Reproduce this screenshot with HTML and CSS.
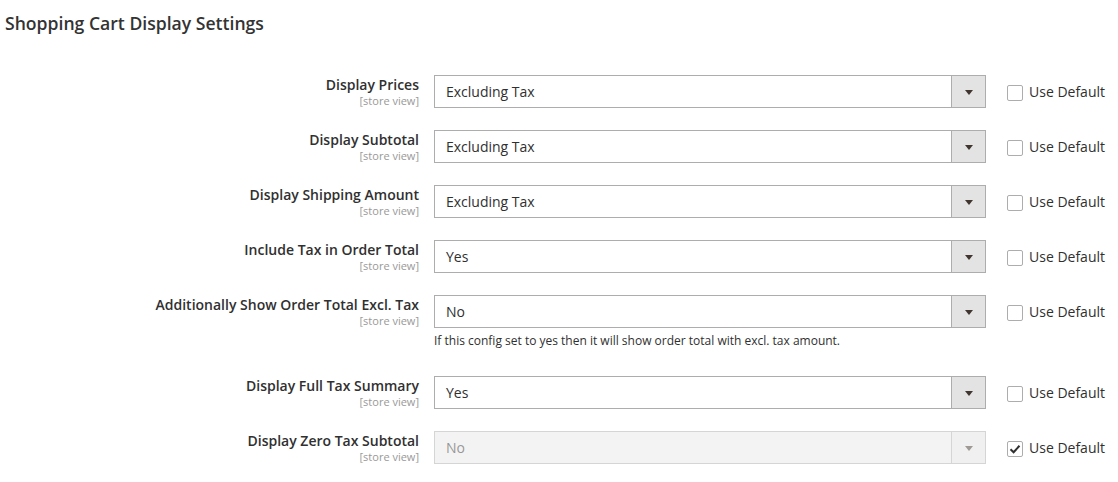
FILE: index.html
```html
<!DOCTYPE html>
<html>
<head>
<meta charset="utf-8">
<link rel="stylesheet" href="styles.css">
</head>
<body>
<div class="page">
  <h2 class="title">Shopping Cart Display Settings</h2>
  <div class="rows">
    <div class="row">
      <div class="label"><span class="name">Display Prices</span><span class="scope">[store view]</span></div>
      <div class="field"><div class="select"><span class="value">Excluding Tax</span><span class="arrow"></span></div></div>
      <label class="default"><span class="box"></span>Use Default</label>
    </div>
    <div class="row">
      <div class="label"><span class="name">Display Subtotal</span><span class="scope">[store view]</span></div>
      <div class="field"><div class="select"><span class="value">Excluding Tax</span><span class="arrow"></span></div></div>
      <label class="default"><span class="box"></span>Use Default</label>
    </div>
    <div class="row">
      <div class="label"><span class="name">Display Shipping Amount</span><span class="scope">[store view]</span></div>
      <div class="field"><div class="select"><span class="value">Excluding Tax</span><span class="arrow"></span></div></div>
      <label class="default"><span class="box"></span>Use Default</label>
    </div>
    <div class="row">
      <div class="label"><span class="name">Include Tax in Order Total</span><span class="scope">[store view]</span></div>
      <div class="field"><div class="select"><span class="value">Yes</span><span class="arrow"></span></div></div>
      <label class="default"><span class="box"></span>Use Default</label>
    </div>
    <div class="row">
      <div class="label"><span class="name">Additionally Show Order Total Excl. Tax</span><span class="scope">[store view]</span></div>
      <div class="field"><div class="select"><span class="value">No</span><span class="arrow"></span></div>
        <p class="note">If this config set to yes then it will show order total with excl. tax amount.</p></div>
      <label class="default"><span class="box"></span>Use Default</label>
    </div>
    <div class="row">
      <div class="label"><span class="name">Display Full Tax Summary</span><span class="scope">[store view]</span></div>
      <div class="field"><div class="select"><span class="value">Yes</span><span class="arrow"></span></div></div>
      <label class="default"><span class="box"></span>Use Default</label>
    </div>
    <div class="row">
      <div class="label"><span class="name">Display Zero Tax Subtotal</span><span class="scope">[store view]</span></div>
      <div class="field"><div class="select disabled"><span class="value">No</span><span class="arrow"></span></div></div>
      <label class="default"><span class="box checked"><svg width="12" height="10" viewBox="0 0 12 10"><path d="M1.5 5.2 L4.6 8.2 L10.5 1.8" fill="none" stroke="#303030" stroke-width="2"/></svg></span>Use Default</label>
    </div>
  </div>
</div>
</body>
</html>
```

FILE: styles.css
```css
* { box-sizing: border-box; }
html, body { margin: 0; padding: 0; background: #fff; }
body {
  font-family: "Open Sans", "Liberation Sans", sans-serif;
  color: #303030;
  font-size: 14px;
}
.page { padding: 11px 0 0 5px; }
.title {
  margin: 0;
  font-size: 17.6px;
  font-weight: 600;
  line-height: 24px;
  color: #333;
}
.rows { margin-top: 40px; display: flex; flex-direction: column; gap: 22px; }
.row {
  display: grid;
  grid-template-columns: 414px 552px auto;
  column-gap: 15px;
  align-items: start;
}
.row .default { margin-left: 6px; }
.label { display: flex; flex-direction: column; align-items: flex-end; text-align: right; }
.name { font-weight: 600; font-size: 14px; line-height: 18px; color: #303030; padding-top: 1px; }
.scope { font-size: 11px; line-height: 13px; color: #999; }
.select {
  height: 33px;
  border: 1px solid #adadad;
  background: #fff;
  display: flex;
  align-items: center;
}
.value { flex: 1; padding-left: 11px; font-size: 14px; color: #303030; }
.arrow {
  width: 34px;
  align-self: stretch;
  background: #e3e3e3;
  border-left: 1px solid #adadad;
  position: relative;
}
.arrow::after {
  content: "";
  position: absolute;
  left: 50%;
  top: 50%;
  margin-left: -4px;
  margin-top: -2px;
  border-left: 4px solid transparent;
  border-right: 4px solid transparent;
  border-top: 5px solid #41362f;
}
.select.disabled { opacity: 0.5; background: #e9e9e9; }
.select.disabled .arrow { background: #e3e3e3; }
.note { margin: 4px 0 5px; font-size: 12px; line-height: 17px; color: #303030; }
.default {
  display: flex;
  align-items: center;
  gap: 6px;
  height: 33px;
  font-size: 14px;
  color: #303030;
  white-space: nowrap;
}
.box {
  width: 16px;
  height: 16px;
  border: 1px solid #adadad;
  border-radius: 2px;
  background: #fff;
  display: flex;
  align-items: center;
  justify-content: center;
  margin-top: 2px;
}
```
